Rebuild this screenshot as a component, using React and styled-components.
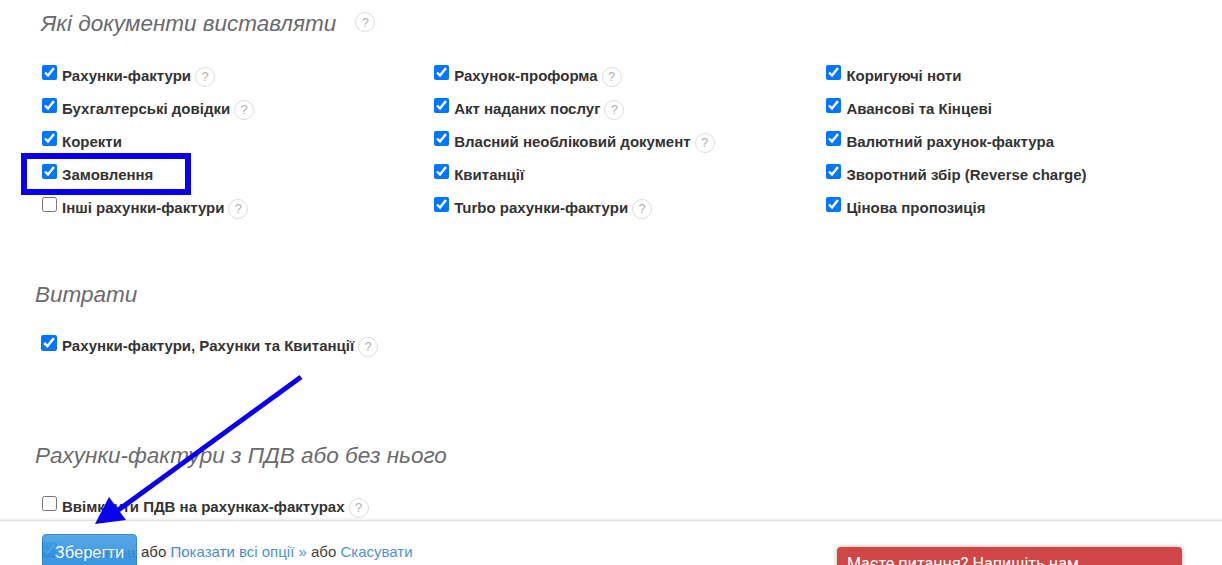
import React from 'react';
import styled, { createGlobalStyle } from 'styled-components';

const GlobalStyle = createGlobalStyle`
  html, body {
    margin: 0;
    height: 565px;
    overflow: hidden;
    background: #fff;
    font-family: "Liberation Sans", Arial, sans-serif;
    color: #333;
  }
`;

const docs = [
  { label: 'Рахунки-фактури', checked: true, help: true },
  { label: 'Рахунок-проформа', checked: true, help: true },
  { label: 'Коригуючі ноти', checked: true },
  { label: 'Бухгалтерські довідки', checked: true, help: true },
  { label: 'Акт наданих послуг', checked: true, help: true },
  { label: 'Авансові та Кінцеві', checked: true },
  { label: 'Коректи', checked: true },
  { label: 'Власний необліковий документ', checked: true, help: true },
  { label: 'Валютний рахунок-фактура', checked: true },
  { label: 'Замовлення', checked: true, marked: true },
  { label: 'Квитанції', checked: true },
  { label: 'Зворотний збір (Reverse charge)', checked: true },
  { label: 'Інші рахунки-фактури', checked: false, help: true },
  { label: 'Turbo рахунки-фактури', checked: true, help: true },
  { label: 'Цінова пропозиція', checked: true },
];

const Page = styled.div`
  position: relative;
  height: 565px;
  overflow: hidden;
`;

const Content = styled.div`
  padding: 0 35px;
`;

const Title = styled.h3`
  margin: 0;
  font-size: 22.5px;
  line-height: 30px;
  font-weight: 400;
  font-style: italic;
  color: #6a6a6e;
`;

const FirstHeading = styled.div`
  display: flex;
  align-items: flex-start;
  gap: 19px;
  padding: 9px 0 0 6px;
`;

const Heading = styled(Title)`
  margin-top: ${(p) => p.$top}px;
`;

const Grid = styled.div`
  display: grid;
  grid-template-columns: repeat(3, 392.2px);
  grid-auto-rows: 33px;
  margin: 26px 0 0 7px;
`;

const Row = styled.label`
  position: relative;
  display: flex;
  align-items: flex-start;
  font-size: 15px;
  line-height: 20px;
  font-weight: 700;
  color: #333;
`;

const Check = styled.input.attrs({ type: 'checkbox' })`
  width: ${(p) => p.$size}px;
  height: ${(p) => p.$size}px;
  margin: 0 5px 0 0;
  flex: none;
`;

const Label = styled.span`
  margin-top: 1px;
`;

const Tag = styled.span`
  margin-left: 29px;
  color: #e04a3a;
`;

const Help = styled.span`
  display: inline-flex;
  align-items: center;
  justify-content: center;
  box-sizing: border-box;
  width: 20px;
  height: 20px;
  flex: none;
  margin: 2px 0 0 4px;
  border: 1px solid #ddd;
  border-radius: 50%;
  background: #fff;
  font-size: 13px;
  font-weight: 400;
  color: #b0b0b0;
`;

const TitleHelp = styled(Help)`
  margin: 3px 0 0;
`;

const Marker = styled.span`
  position: absolute;
  left: -21px;
  top: -11px;
  width: 170px;
  height: 42px;
  box-sizing: border-box;
  border: 6px solid #0a00ee;
`;

const SingleRow = styled.div`
  margin: ${(p) => p.$top}px 0 0 ${(p) => p.$left || 6}px;
`;

const Arrow = styled.svg`
  position: absolute;
  left: 90px;
  top: 370px;
  z-index: 3;
`;

const Footer = styled.div`
  position: absolute;
  left: 0;
  right: 0;
  top: 520px;
  height: 45px;
  z-index: 2;
  border-top: 1px solid #ddd;
  box-shadow: 0 -1px 2px rgba(0, 0, 0, 0.08);
  background: #fff;
  opacity: 0.93;
  display: flex;
  align-items: flex-start;
  padding: 13px 0 0 42px;
  font-size: 15px;
  line-height: 36px;
  color: #333;
`;

const SaveButton = styled.button`
  width: 95px;
  height: 38px;
  margin-right: 4px;
  padding: 0 0 2px;
  border: 1px solid #2a7fc4;
  border-radius: 4px;
  background: linear-gradient(#4ba3e6, #2488db);
  color: #fff;
  font-family: inherit;
  font-size: 16.5px;
  line-height: 34px;
`;

const Links = styled.span`
  white-space: pre;
`;

const Link = styled.a`
  color: #428bca;
  text-decoration: none;
`;

const Chat = styled.div`
  position: absolute;
  left: 837px;
  top: 547px;
  width: 345px;
  height: 40px;
  z-index: 4;
  box-sizing: border-box;
  padding: 7px 11px 7px 10px;
  display: flex;
  justify-content: space-between;
  border-radius: 4px 4px 0 0;
  background: #d14747;
  box-shadow: 0 0 4px rgba(0, 0, 0, 0.35);
  color: #fff;
  font-family: Roboto, sans-serif;
  font-size: 16.15px;
  line-height: 20px;
`;

const ChatCaret = styled.span`
  margin: 5px 4px 0 0;
  font-size: 10px;
`;

const DocRow = ({ doc, size = 15 }) => (
  <Row>
    {doc.marked && <Marker />}
    <Check $size={size} defaultChecked={doc.checked} />
    <Label>
      {doc.label}
      {doc.tag && <Tag>{doc.tag}</Tag>}
    </Label>
    {doc.help && <Help>?</Help>}
  </Row>
);

export default function App() {
  return (
    <Page>
      <GlobalStyle />
      <Content>
        <FirstHeading>
          <Title>Які документи виставляти</Title>
          <TitleHelp>?</TitleHelp>
        </FirstHeading>
        <Grid>
          {docs.map((doc) => (
            <DocRow key={doc.label} doc={doc} />
          ))}
        </Grid>
        <Heading $top={50}>Витрати</Heading>
        <SingleRow $top={25}>
          <DocRow size={16} doc={{ label: 'Рахунки-фактури, Рахунки та Квитанції', checked: true, help: true }} />
        </SingleRow>
        <Heading $top={84}>Рахунки-фактури з ПДВ або без нього</Heading>
        <SingleRow $top={25} $left={7}>
          <DocRow doc={{ label: 'Ввімкнути ПДВ на рахунках-фактурах', checked: false, help: true }} />
        </SingleRow>
        <SingleRow $top={24}>
          <DocRow size={16} doc={{ label: 'Ввімкнення ПДВ', tag: '[PL]', checked: true }} />
        </SingleRow>
      </Content>
      <Arrow width="220" height="160" viewBox="0 0 220 160">
        <line x1="211" y1="7" x2="27" y2="141" stroke="#0a00ee" strokeWidth="5" />
        <polygon points="5,154 19,127 36,150" fill="#0a00ee" />
      </Arrow>
      <Footer>
        <SaveButton>Зберегти</SaveButton>
        <Links>
          або <Link href="#">Показати всі опції »</Link> або <Link href="#">Скасувати</Link>
        </Links>
      </Footer>
      <Chat>
        <span>Маєте питання? Напишіть нам</span>
        <ChatCaret>▲</ChatCaret>
      </Chat>
    </Page>
  );
}
